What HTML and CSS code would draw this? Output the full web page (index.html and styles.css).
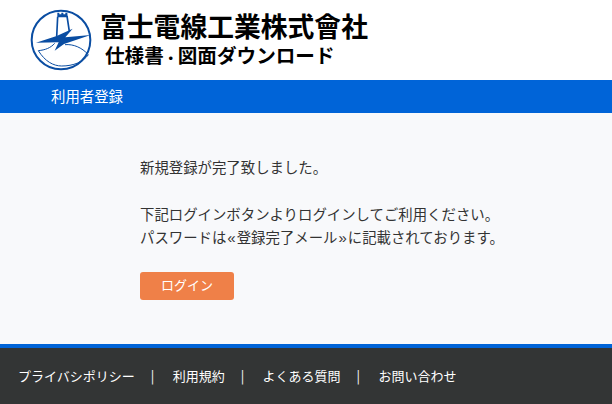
FILE: index.html
```html
<!DOCTYPE html>
<html>

<head>
    <title>利用者登録</title>
    <link rel="stylesheet" href="styles.css">
</head>

<body>
    <div class="header">
        <svg class="logo" viewBox="27 22 192 192" width="64" height="64">
            <circle cx="123" cy="118" r="88" fill="#fff" stroke="#0a4da2" stroke-width="6"/>
            <path d="M55 150 C75 148 92 142 104 128 M135 132 C160 130 185 140 205 162" fill="none" stroke="#0a4da2" stroke-width="3"/>
            <path d="M55 150 C75 182 100 196 125 196 C160 196 190 184 205 162" fill="none" stroke="#0a4da2" stroke-width="3"/>
            <path d="M113 48 L110 108 M141 46 L148 92" fill="none" stroke="#0a4da2" stroke-width="5"/>
            <path d="M112 36 L118 36 L118 41 L124 41 L124 36 L130 36 L130 41 L136 41 L136 36 L142 36 L143 50 L112 50 Z" fill="#0a4da2"/>
            <path d="M48 126 L110 106 L158 84 L136 110 L212 103 L132 130 L104 150 L116 125 Z" fill="#0a4da2"/>
        </svg>
        <div class="logo-text">
            <div class="company">富士電線工業株式會社</div>
            <div class="subtitle">仕様書<span class="dot">・</span>図面ダウンロード</div>
        </div>
    </div>

    <div class="title-bar">利用者登録</div>

    <div class="content">
        <p>新規登録が完了致しました。</p>
        <p>下記ログインボタンよりログインしてご利用ください。<br>パスワードは<span class="quote">«</span>登録完了メール<span class="quote">»</span>に記載されております。</p>
        <a class="login-button" href="#">ログイン</a>
    </div>

    <div class="footer">
        <a href="#">プライバシポリシー</a>
        <span class="sep">|</span>
        <a href="#">利用規約</a>
        <span class="sep">|</span>
        <a href="#">よくある質問</a>
        <span class="sep">|</span>
        <a href="#">お問い合わせ</a>
    </div>
</body>

</html>
```

FILE: styles.css
```css
body {
    margin: 0;
    padding: 0;
    overflow: hidden;
    height: 404px;
    display: flex;
    flex-direction: column;
    font-family: "Noto Sans CJK JP", "Noto Sans", sans-serif;
    font-size: 14.4px;
    color: #333;
    background-color: #f8f9fb;
}

.header {
    height: 80px;
    background-color: #fff;
    display: flex;
    align-items: center;
    padding-left: 29px;
    box-sizing: border-box;
}

.logo {
    flex-shrink: 0;
}

.logo-text {
    margin-left: 7px;
    color: #000;
    font-family: "Liberation Sans", "Noto Sans CJK JP", sans-serif;
    font-weight: 700;
}

.company {
    font-size: 26.8px;
    line-height: 32px;
    margin-top: 2px;
    white-space: nowrap;
}

.subtitle {
    font-size: 19.6px;
    line-height: 24px;
    margin-left: 5px;
    white-space: nowrap;
}

.dot {
    font-size: 14px;
}

.title-bar {
    height: 33px;
    line-height: 31px;
    background-color: #0064d8;
    color: #fff;
    padding-left: 51px;
}

.content {
    flex: 1;
    padding: 42px 0 0 140px;
}

.content p {
    margin: 0 0 23px 0;
    line-height: 23.5px;
}

.quote {
    font-family: "Liberation Sans", sans-serif;
    font-size: 15px;
    line-height: 1;
    margin: 0 1px;
}

.login-button {
    display: block;
    width: 94px;
    height: 28px;
    line-height: 26px;
    margin-top: 1px;
    text-align: center;
    font-size: 13px;
    background-color: #ef8048;
    color: #fff;
    border-radius: 3px;
    text-decoration: none;
}

.footer {
    padding: 0 0 2px 18px;
    box-sizing: border-box;
    height: 60px;
    border-top: 4px solid #0064d8;
    background-color: #333535;
    color: #fff;
    display: flex;
    align-items: center;
    font-size: 13px;
}

.footer a {
    color: #fff;
    text-decoration: none;
}

.sep {
    margin: 0 18.4px 0 16px;
}
```
